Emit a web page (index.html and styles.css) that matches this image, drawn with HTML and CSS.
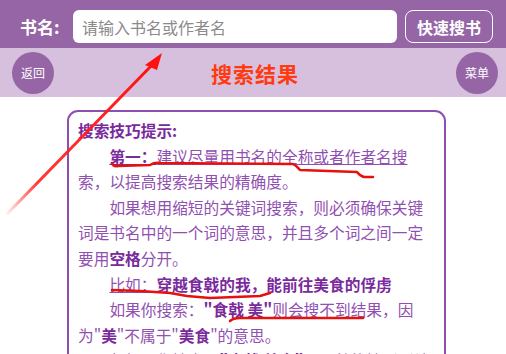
FILE: index.html
```html
<!DOCTYPE html>
<html lang="zh-CN">
<head>
    <meta charset="UTF-8">
    <meta name="viewport" content="width=device-width, initial-scale=1.0">
    <title>搜索结果</title>
    <link rel="stylesheet" href="styles.css">
</head>
<body>
    <div class="topbar">
        <span class="label">书名:</span>
        <input class="search" type="text" placeholder="请输入书名或作者名">
        <button class="quick">快速搜书</button>
    </div>
    <div class="subbar">
        <span class="circle">返回</span>
        <h1>搜索结果</h1>
        <span class="circle">菜单</span>
    </div>
    <div class="container">
        <div class="card">
            <p class="head">搜索技巧提示:</p>
            <p class="ind"><b class="u">第一：</b><span class="u">建议尽量用书名的全称或者作者名搜</span><span class="nw">索，</span>以提高搜索结果的精确度。</p>
            <p class="ind">如果想用缩短的关键词搜索，则必须确保关键词是书名中的一个词的意思，并且多个词之间一定要用<b>空格</b>分开。</p>
            <p class="ind"><span class="u">比如：</span><b>穿越食戟的我，能前往美食的俘虏</b></p>
            <p class="ind">如果你搜索：<b>"食戟 美"</b>则会搜不到结果，因为"<b>美</b>"不属于"<b>美食</b>"的意思。</p>
            <p class="ind">但如果你搜索：<b>"食戟 美食"</b>，那就能搜到到结果了。</p>
        </div>
    </div>
    <svg class="marks" width="506" height="354" viewBox="0 0 506 354">
        <defs>
            <linearGradient id="fade" x1="8" y1="213" x2="153" y2="64" gradientUnits="userSpaceOnUse">
                <stop offset="0" stop-color="#f22" stop-opacity="0.1"/>
                <stop offset="0.2" stop-color="#f22" stop-opacity="0.9"/>
                <stop offset="1" stop-color="#f11"/>
            </linearGradient>
        </defs>
        <!-- arrow to the input -->
        <path d="M8 213 L153 64" stroke="url(#fade)" stroke-width="3" fill="none" stroke-linecap="round"/>
        <path d="M162 53 L145 65 L157 70 Z" fill="#f11"/>
        <!-- hand drawn underlines -->
        <path d="M112 163 Q113 167 118 166 L150 165 Q155 162 160 163 L293 164 Q297 166 300 170 L357 172 Q360 176 364 177 L373 177" stroke="#e8100c" stroke-width="2.5" fill="none" stroke-linecap="round" stroke-linejoin="round"/>
        <path d="M112 290 L140 291 L170 293 L187 296 L210 298 L260 296 L270 293" stroke="#e8100c" stroke-width="2.5" fill="none" stroke-linecap="round" stroke-linejoin="round"/>
        <path d="M230 321 Q233 318 240 318 L363 318" stroke="#e8100c" stroke-width="2.5" fill="none" stroke-linecap="round"/>
    </svg>
</body>
</html>
```

FILE: styles.css
```css
body {
    margin: 0;
    padding: 0;
    font-family: "Noto Sans CJK SC", "Noto Sans", sans-serif;
    background: #fff;
    width: 506px;
    height: 354px;
    overflow: hidden;
    position: relative;
}
.topbar {
    display: flex;
    align-items: center;
    height: 33px;
    padding: 10px 13px 5px 20px;
    background-color: #9565a5;
}
.topbar .label {
    color: #fff;
    font-weight: bold;
    font-size: 17px;
    width: 42px;
    margin-right: 11px;
}
.search {
    width: 324px;
    height: 33px;
    box-sizing: border-box;
    border: none;
    border-radius: 6px;
    padding: 0 9px;
    font-family: inherit;
    font-size: 16px;
    color: #333;
    outline: none;
}
.search::placeholder {
    color: #8a8a8a;
}
.quick {
    margin-left: 8px;
    width: 88px;
    height: 33px;
    box-sizing: border-box;
    background: transparent;
    border: 1.5px solid #fff;
    border-radius: 8px;
    color: #fff;
    font-family: inherit;
    font-weight: bold;
    font-size: 16px;
    padding: 0;
}
.subbar {
    display: flex;
    align-items: center;
    justify-content: space-between;
    height: 49px;
    padding: 0 8px 0 12px;
    background-color: #d6c0dd;
}
.circle {
    width: 42px;
    height: 42px;
    border-radius: 50%;
    background-color: #9565a5;
    color: #fff;
    font-size: 12px;
    display: flex;
    align-items: center;
    justify-content: center;
}
.subbar h1 {
    margin: 0;
    font-size: 21px;
    font-weight: bold;
    color: #ff3a10;
    letter-spacing: 1px;
}
.container {
    padding: 13px 0 0 67px;
}
.card {
    width: 379px;
    box-sizing: border-box;
    border: 2px solid #8e4fb0;
    border-radius: 11px;
    padding: 6px 12px 20px 9px;
    color: #9150b1;
    font-size: 15.7px;
    line-height: 25.6px;
}
.card p {
    margin: 0;
}
.card b {
    color: #7a2a9c;
}
.card .head {
    color: #7a2a9c;
    font-weight: bold;
}
.card .ind {
    text-indent: 2em;
}
.card .u {
    text-decoration: underline;
}
.card .nw {
    white-space: nowrap;
}
.marks {
    position: absolute;
    left: 0;
    top: 0;
    pointer-events: none;
}
```
